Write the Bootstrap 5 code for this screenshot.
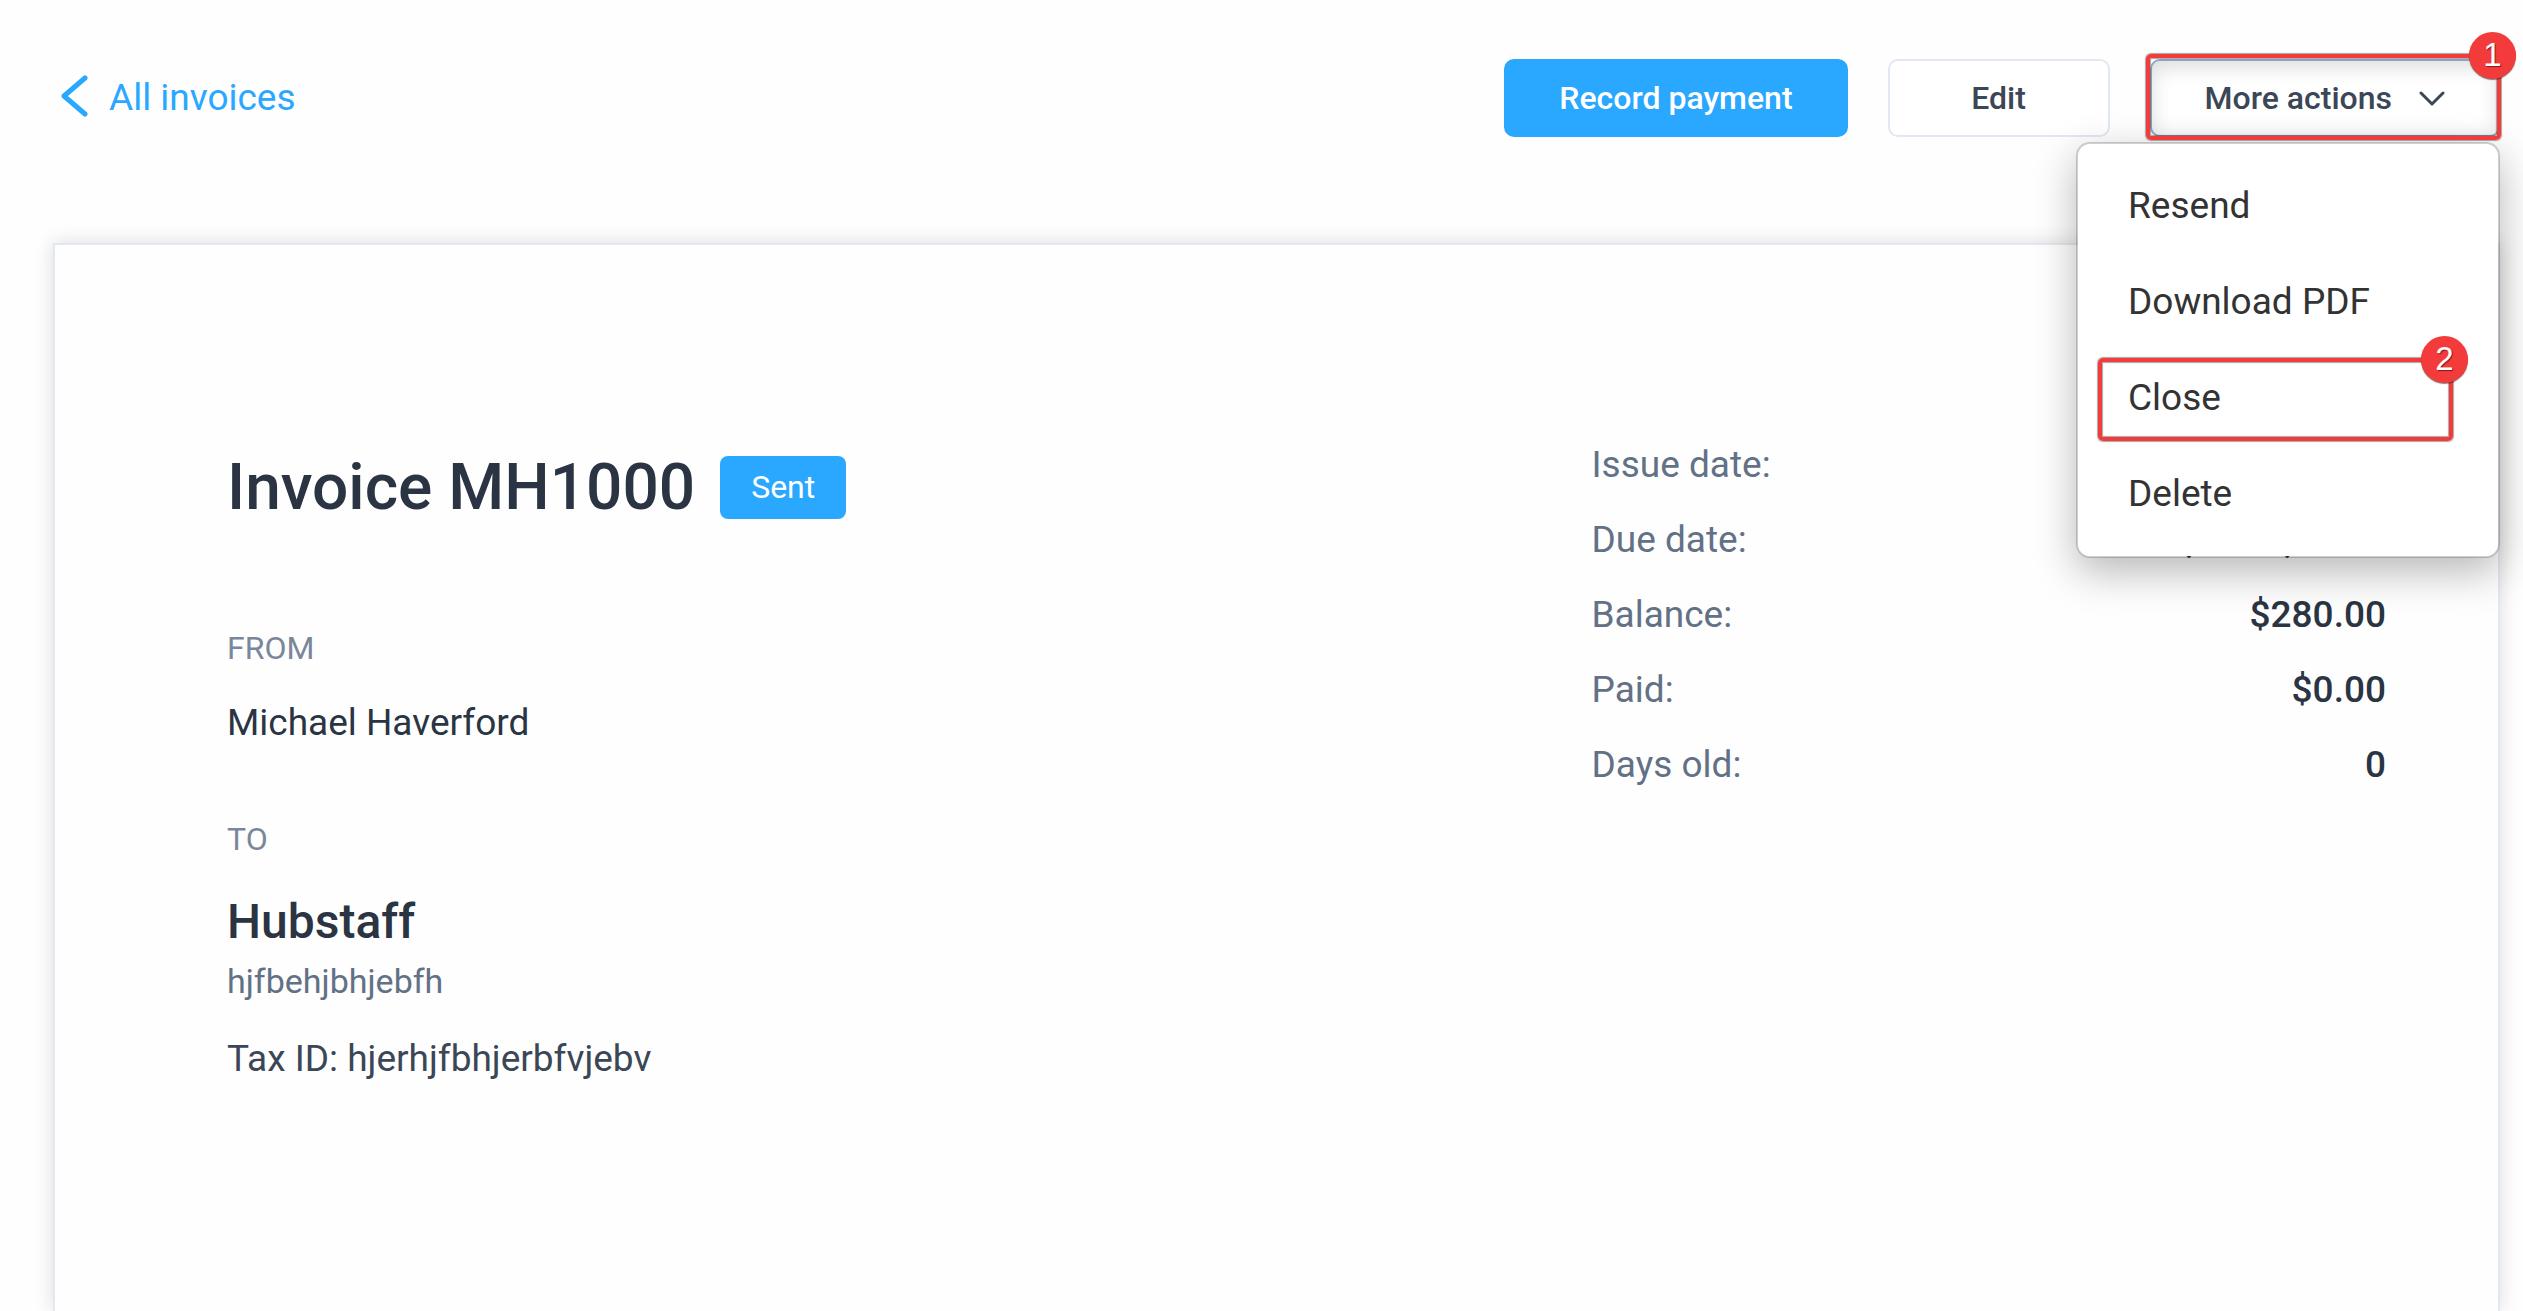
<!DOCTYPE html>
<html lang="en">
<head>
<meta charset="utf-8">
<meta name="viewport" content="width=device-width, initial-scale=1">
<title>Invoice MH1000</title>
<link href="https://cdn.jsdelivr.net/npm/bootstrap@5.3.0/dist/css/bootstrap.min.css" rel="stylesheet">
<style>
  body { font-family: Roboto, "Liberation Sans", sans-serif; font-size: 37px; line-height: 44px; color: #2a3442; background: #fefefe; }
  .page { padding: 59px 23px 0 53px; overflow: hidden; }
  .back-link { color: #2aa7ff; gap: 21px; padding-left: 8px; }
  .back-link svg { margin-bottom: 4px; }
  .actions { gap: 40px; }
  .action-btn { height: 78px; padding: 0 53px; border: 2px solid #e2e8f0; border-radius: 10px; font-size: 32px; line-height: 40px; font-weight: 500; color: #3b4656; background: #fff; white-space: nowrap; }
  .action-btn.primary { background: #2aa7ff; border-color: #2aa7ff; color: #fff; }
  .action-btn.edit { min-width: 222px; }
  .action-btn.more { border-color: #8fa5bf; box-shadow: inset 0 6px 20px rgba(0,0,0,.14); gap: 27px; }
  .callout-frame { border: 4px solid #f43b3b; border-radius: 5px; box-shadow: 0 0 1px 1px rgba(60,60,60,.45), inset 0 0 1px 1px rgba(60,60,60,.45); pointer-events: none; z-index: 1100; }
  .callout-frame.on-button { inset: -5px -1px -3px -4px; }
  .callout-frame.on-item { inset: 8px 45px 5px 20px; }
  .callout-num { top: -26px; right: -19px; width: 47px; height: 47px; border-radius: 50%; background: #f43b3b; color: #fff; font-family: "Liberation Sans", sans-serif; font-size: 33px; line-height: 46px; text-align: center; text-shadow: 1px 1px 1px rgba(0,0,0,.5); box-shadow: 0 1px 1px rgba(0,0,0,.5); }
  .actions .dropdown-menu { top: 83px; right: 0; width: 424px; padding: 14px 0; border: 2px solid rgba(0,0,0,.18); border-radius: 14px; box-shadow: 0 14px 42px rgba(0,0,0,.28); background-color: #fff; background-clip: padding-box; }
  .actions .dropdown-item { padding: 26px 50px; font-size: 37px; line-height: 44px; color: #333; }
  .sheet { margin-top: 106px; padding: 205px 112px 0 172px; border: 2px solid #e2e8ef; border-bottom: 0; border-radius: 0; box-shadow: 0 0 18px rgba(0,0,0,.14); background: #fefefe; }
  .title-row { gap: 25px; margin-bottom: 103px; }
  .title-row h1 { font-size: 64px; line-height: 75px; font-weight: 500; }
  .status { padding: 0 31px; border-radius: 8px; background: #2aa7ff; color: #fff; font-size: 32px; line-height: 63px; font-weight: 400; }
  .party-label { font-size: 32px; line-height: 40px; color: #7a879b; font-weight: 400; }
  .party-from { margin: 33px 0 74px; }
  .client { font-size: 48px; line-height: 56px; font-weight: 500; margin: 35px 0 10px; }
  .address { font-size: 34px; line-height: 42px; color: #627186; margin-bottom: 35px; }
  .tax { color: #3b4656; }
  .summary { flex: 0 0 36.8%; margin-top: -23px; line-height: 75px; }
  .summary dt { font-weight: 400; color: #627186; }
  .summary dd { font-weight: 500; }
</style>
<script src="https://cdn.jsdelivr.net/npm/bootstrap@5.3.0/dist/js/bootstrap.bundle.min.js"></script>
</head>
<body>
<div class="page d-flex flex-column min-vh-100">
  <header class="d-flex justify-content-between align-items-center">
    <a href="#" class="back-link d-flex align-items-center text-decoration-none">
      <svg width="27" height="42" viewBox="0 0 27 42" fill="none" stroke="currentColor" stroke-width="5" stroke-linecap="round" stroke-linejoin="round" aria-hidden="true"><path d="M24 3 3 21 24 39"/></svg>
      <span>All invoices</span>
    </a>
    <div class="actions d-flex">
      <button type="button" class="action-btn primary">Record payment</button>
      <button type="button" class="action-btn edit">Edit</button>
      <div class="position-relative">
        <button type="button" class="action-btn more d-flex align-items-center" aria-expanded="true">More actions
          <svg width="26" height="15" viewBox="0 0 26 15" fill="none" stroke="currentColor" stroke-width="3" stroke-linecap="round" stroke-linejoin="round" aria-hidden="true"><path d="M2 2 13 13 24 2"/></svg>
        </button>
        <div class="callout-frame on-button position-absolute"><span class="callout-num position-absolute">1</span></div>
        <ul class="dropdown-menu show">
          <li><a class="dropdown-item" href="#">Resend</a></li>
          <li><a class="dropdown-item" href="#">Download PDF</a></li>
          <li class="position-relative"><a class="dropdown-item" href="#">Close</a>
            <div class="callout-frame on-item position-absolute"><span class="callout-num position-absolute">2</span></div></li>
          <li><a class="dropdown-item" href="#">Delete</a></li>
        </ul>
      </div>
    </div>
  </header>
  <main class="sheet card flex-grow-1">
    <div class="d-flex justify-content-between align-items-start">
      <section>
        <div class="title-row d-flex align-items-center">
          <h1 class="mb-0">Invoice MH1000</h1>
          <span class="status">Sent</span>
        </div>
        <h2 class="party-label mb-0">FROM</h2>
        <p class="party-from">Michael Haverford</p>
        <h2 class="party-label mb-0">TO</h2>
        <p class="client">Hubstaff</p>
        <p class="address">hjfbehjbhjebfh</p>
        <p class="tax mb-0">Tax ID: hjerhjfbhjerbfvjebv</p>
      </section>
      <dl class="summary mb-0">
        <div class="d-flex justify-content-between"><dt>Issue date:</dt><dd class="mb-0"></dd></div>
        <div class="d-flex justify-content-between"><dt>Due date:</dt><dd class="mb-0">Fri, Jul 1, 2022</dd></div>
        <div class="d-flex justify-content-between"><dt>Balance:</dt><dd class="mb-0">$280.00</dd></div>
        <div class="d-flex justify-content-between"><dt>Paid:</dt><dd class="mb-0">$0.00</dd></div>
        <div class="d-flex justify-content-between"><dt>Days old:</dt><dd class="mb-0">0</dd></div>
      </dl>
    </div>
  </main>
</div>
</body>
</html>
